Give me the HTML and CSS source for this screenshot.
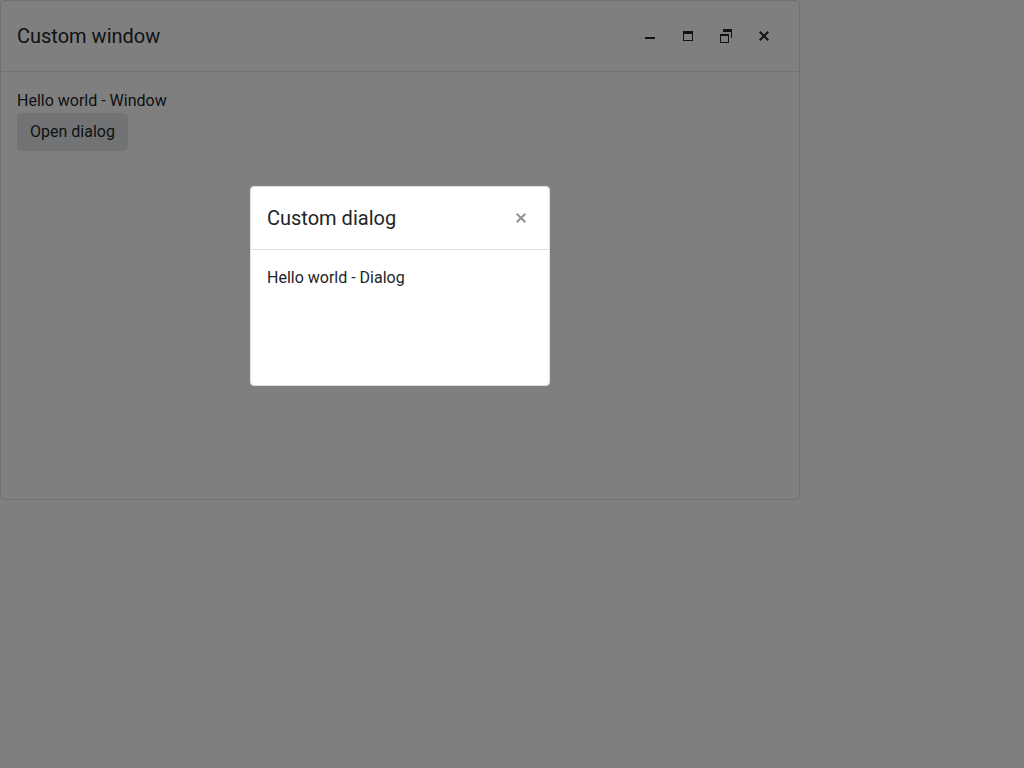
FILE: index.html
```html
<!DOCTYPE html>
<html lang="en">
<head>
<meta charset="utf-8">
<meta name="viewport" content="width=device-width, initial-scale=1">
<title>Custom window</title>
<link rel="stylesheet" href="styles.css">
</head>
<body>
<main class="window">
  <header class="window-header">
    <h1 class="title">Custom window</h1>
    <div class="window-actions">
      <button class="icon-button" type="button" aria-label="Minimize">
        <svg class="icon" viewBox="0 0 16 16" aria-hidden="true"><path d="M3 9h10v2H3z"/></svg>
      </button>
      <button class="icon-button" type="button" aria-label="Maximize">
        <svg class="icon" viewBox="0 0 16 16" aria-hidden="true"><path fill-rule="evenodd" d="M3 3h10v10H3zM4 6v6h8V6z"/></svg>
      </button>
      <button class="icon-button" type="button" aria-label="Restore">
        <svg class="icon" viewBox="0 0 16 16" aria-hidden="true"><path fill-rule="evenodd" d="M5 1h9v9h-1V4H5zM2 6h9v9H2zM3 8v6h7V8z"/></svg>
      </button>
      <button class="icon-button" type="button" aria-label="Close window">
        <svg class="icon" viewBox="0 0 16 16" aria-hidden="true"><path class="cross" d="M3.7 3.7l8.6 8.6M12.3 3.7l-8.6 8.6"/></svg>
      </button>
    </div>
  </header>
  <div class="window-body">
    <p class="text">Hello world - Window</p>
    <button class="button" type="button">Open dialog</button>
  </div>
</main>
<div class="overlay"></div>
<section class="dialog" role="dialog" aria-modal="true" aria-labelledby="dialog-title">
  <header class="dialog-header">
    <h2 class="title" id="dialog-title">Custom dialog</h2>
    <button class="dialog-close" type="button" aria-label="Close dialog">
      <svg class="icon" viewBox="0 0 16 16" aria-hidden="true"><path class="cross" d="M3.7 3.7l8.6 8.6M12.3 3.7l-8.6 8.6"/></svg>
    </button>
  </header>
  <div class="dialog-body">
    <p class="text">Hello world - Dialog</p>
  </div>
</section>
</body>
</html>
```

FILE: styles.css
```css
* {
  box-sizing: border-box;
}

body {
  margin: 0;
  background: #fff;
  color: #212529;
  font-family: Roboto, "Liberation Sans", sans-serif;
  font-size: 16px;
  line-height: 24px;
}

.window {
  max-width: 800px;
  min-height: 500px;
  border: 1px solid #dee2e6;
  border-radius: 4px;
}

.window-header,
.dialog-header {
  display: flex;
  align-items: center;
  justify-content: space-between;
  padding: 16px;
  border-bottom: 1px solid #dee2e6;
}

.title {
  margin: 0;
  font-size: 20px;
  font-weight: 400;
  line-height: 30px;
}

.window-actions {
  display: flex;
}

.icon-button,
.dialog-close {
  display: flex;
  align-items: center;
  justify-content: center;
  padding: 0;
  border: 0;
  background: transparent;
  color: inherit;
  cursor: pointer;
}

.icon-button {
  width: 38px;
  height: 38px;
}

.dialog-close {
  width: 24px;
  height: 24px;
  opacity: 0.5;
}

.icon {
  width: 16px;
  height: 16px;
  fill: currentColor;
}

.cross {
  fill: none;
  stroke: currentColor;
  stroke-width: 2;
}

.window-body {
  padding: 17px 16px;
}

.dialog-body {
  padding: 16px;
}

.text {
  margin: 0;
}

.button {
  padding: 6px 12px;
  border: 1px solid #e4e7eb;
  border-radius: 4px;
  background: #e4e7eb;
  color: inherit;
  font: inherit;
  cursor: pointer;
}

.overlay {
  position: fixed;
  inset: 0;
  background: rgba(0, 0, 0, 0.5);
}

.dialog {
  position: absolute;
  top: 186px;
  left: 250px;
  width: 300px;
  min-height: 200px;
  border: 1px solid #dee2e6;
  border-radius: 4px;
  background: #fff;
}
```
